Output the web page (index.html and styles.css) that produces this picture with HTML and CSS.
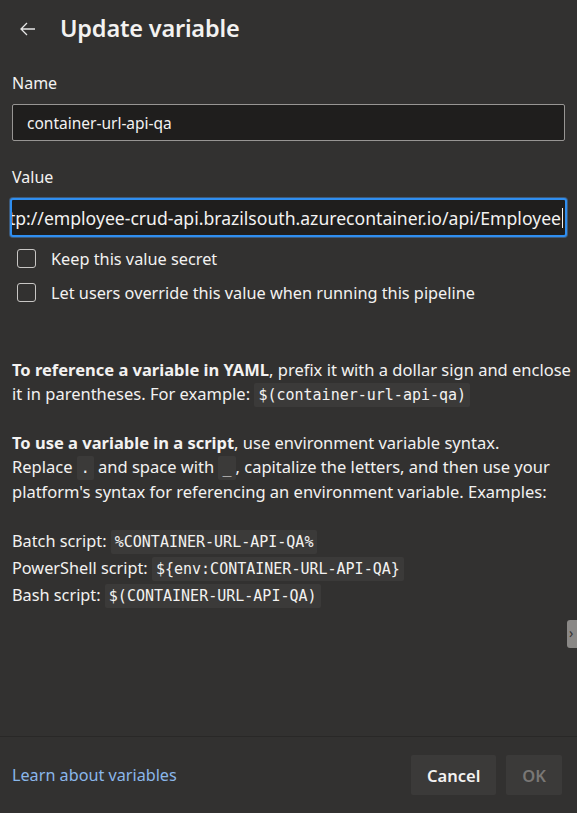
FILE: index.html
```html
<!DOCTYPE html>
<html>
<head>
<meta charset="utf-8">
<link rel="stylesheet" href="styles.css">
</head>
<body>
<div class="panel">
  <div class="header">
    <svg class="back" width="16" height="14" viewBox="0 0 16 14"><path d="M15 7H1.5M7 1L1 7l6 6" fill="none" stroke="#e6e6e6" stroke-width="1.3"/></svg>
    <h1 class="title">Update variable</h1>
  </div>
  <div class="body">
    <label class="label">Name</label>
    <div class="input"><span>container-url-api-qa</span></div>
    <label class="label label-value">Value</label>
    <div class="input focused"><span class="scroll-text">http://employee-crud-api.brazilsouth.azurecontainer.io/api/Employee</span><span class="caret"></span></div>
    <div class="checks">
      <div class="check"><span class="box"></span><span>Keep this value secret</span></div>
      <div class="check"><span class="box"></span><span>Let users override this value when running this pipeline</span></div>
    </div>
    <p class="info"><b>To reference a variable in YAML</b>, prefix it with a dollar sign and enclose<br>it in parentheses. For example: <code>$(container-url-api-qa)</code></p>
    <p class="info"><b>To use a variable in a script</b>, use environment variable syntax.<br>Replace <code>.</code> and space with <code>_</code>, capitalize the letters, and then use your<br>platform's syntax for referencing an environment variable. Examples:</p>
    <div class="examples">
      <div>Batch script: <code>%CONTAINER-URL-API-QA%</code></div>
      <div>PowerShell script: <code>${env:CONTAINER-URL-API-QA}</code></div>
      <div>Bash script: <code>$(CONTAINER-URL-API-QA)</code></div>
    </div>
  </div>
  <div class="footer">
    <a class="link">Learn about variables</a>
    <div class="buttons">
      <button class="btn">Cancel</button>
      <button class="btn disabled">OK</button>
    </div>
  </div>
  <div class="side-tab">›</div>
</div>
</body>
</html>
```
FILE: styles.css
```css
html, body {
  margin: 0;
  padding: 0;
  background: #323130;
}
body {
  width: 577px;
  height: 813px;
  overflow: hidden;
  font-family: "Noto Sans", "Open Sans", sans-serif;
  color: #f3f2f1;
}
.panel {
  position: relative;
  height: 813px;
  display: flex;
  flex-direction: column;
}
.header {
  display: flex;
  align-items: center;
  height: 56px;
  padding-left: 20px;
}
.back {
  margin-right: 24px;
  margin-top: 1px;
}
.title {
  margin: 0;
  font-size: 23.5px;
  font-weight: 600;
  color: #f3f2f1;
  letter-spacing: -0.2px;
}
.body {
  flex: 1;
  padding: 15px 12px 0 12px;
}
.label {
  display: block;
  font-size: 16px;
  line-height: 24px;
  margin-bottom: 9px;
}
.label-value {
  margin-top: 24px;
}
.input {
  box-sizing: border-box;
  height: 37px;
  border: 1px solid #979593;
  border-radius: 2px;
  background: #1f1e1d;
  display: flex;
  align-items: center;
  padding-left: 14px;
  font-size: 15.5px;
  color: #f3f2f1;
  overflow: hidden;
  white-space: nowrap;
}
.input.focused {
  height: 39px;
  margin: 0 -2px;
  border: 2px solid #2f8ef0;
  box-shadow: 0 0 0 1px #3d5a7a;
  padding-left: 4px;
  padding-right: 2px;
  border-radius: 3px;
  justify-content: flex-end;
  font-size: 17.6px;
}
.scroll-text {
  flex: none;
}
.caret {
  flex: none;
  display: inline-block;
  width: 1px;
  height: 20px;
  margin-left: 1px;
  background: #f3f2f1;
}
.checks {
  margin-top: 12px;
  display: flex;
  flex-direction: column;
  gap: 15px;
  padding-left: 5px;
}
.check {
  display: flex;
  align-items: center;
  font-size: 16.3px;
  height: 19px;
}
.box {
  box-sizing: border-box;
  width: 19px;
  height: 19px;
  border: 1px solid #c8c6c4;
  border-radius: 3px;
  margin-right: 15px;
}
.info {
  font-size: 16.5px;
  line-height: 24px;
  margin: 0 0 24px 0;
  white-space: nowrap;
}
.info:first-of-type {
  margin-top: 56px;
}
.info b {
  font-weight: 700;
}
code {
  font-family: "DejaVu Sans Mono", monospace;
  font-size: 15px;
  background: #3b3a39;
  padding: 3px 4px;
  border-radius: 2px;
}
.examples {
  font-size: 16.3px;
  line-height: 26px;
  margin-top: 2px;
}
.footer {
  border-top: 1px solid #292827;
  height: 77px;
  box-sizing: border-box;
  display: flex;
  align-items: center;
  justify-content: space-between;
  padding: 0 15px 0 12px;
}
.link {
  color: #8ab7ea;
  font-size: 16.2px;
}
.buttons {
  display: flex;
  gap: 10px;
}
.btn {
  font-family: "Noto Sans", "Open Sans", sans-serif;
  font-size: 16.5px;
  font-weight: 600;
  height: 40px;
  border: none;
  border-radius: 2px;
  background: #3b3a39;
  color: #f3f2f1;
  padding: 0 16px;
}
.btn.disabled {
  color: #797775;
}
.side-tab {
  position: absolute;
  right: -6px;
  top: 620px;
  width: 16px;
  height: 28px;
  background: #8a8886;
  border-radius: 3px;
  color: #323130;
  font-size: 14px;
  line-height: 26px;
  padding-left: 2px;
  box-sizing: border-box;
}
```
